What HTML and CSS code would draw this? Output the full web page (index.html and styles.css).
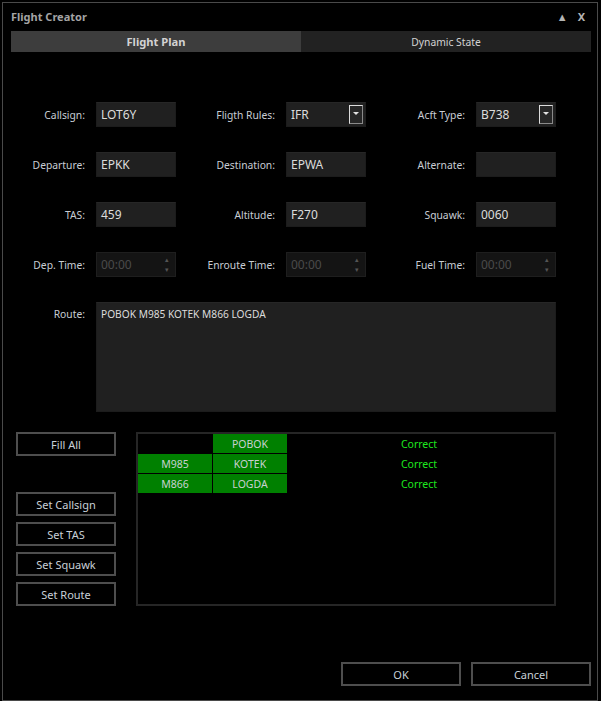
FILE: index.html
```html
<!DOCTYPE html>
<html>
<head>
<meta charset="utf-8">
<link rel="stylesheet" href="styles.css">
</head>
<body>
<div class="window">
  <div class="titlebar">
    <span class="title">Flight Creator</span>
    <span class="controls"><span class="ctl">▲</span><span class="ctl">X</span></span>
  </div>
  <div class="tabs">
    <div class="tab active">Flight Plan</div>
    <div class="tab">Dynamic State</div>
  </div>

  <div class="form">
    <label class="lbl">Callsign:</label>
    <div class="field">LOT6Y</div>
    <label class="lbl">Fligth Rules:</label>
    <div class="field combo">IFR<span class="drop"></span></div>
    <label class="lbl">Acft Type:</label>
    <div class="field combo">B738<span class="drop"></span></div>

    <label class="lbl">Departure:</label>
    <div class="field">EPKK</div>
    <label class="lbl">Destination:</label>
    <div class="field">EPWA</div>
    <label class="lbl">Alternate:</label>
    <div class="field"></div>

    <label class="lbl">TAS:</label>
    <div class="field">459</div>
    <label class="lbl">Altitude:</label>
    <div class="field">F270</div>
    <label class="lbl">Squawk:</label>
    <div class="field">0060</div>

    <label class="lbl">Dep. Time:</label>
    <div class="field time">00:00<span class="spin"><i>▴</i><i>▾</i></span></div>
    <label class="lbl">Enroute Time:</label>
    <div class="field time">00:00<span class="spin"><i>▴</i><i>▾</i></span></div>
    <label class="lbl">Fuel Time:</label>
    <div class="field time">00:00<span class="spin"><i>▴</i><i>▾</i></span></div>

    <label class="lbl top">Route:</label>
    <div class="field route">POBOK M985 KOTEK M866 LOGDA</div>
  </div>

  <div class="lower">
    <div class="actions">
      <button class="btn fill">Fill All</button>
      <button class="btn">Set Callsign</button>
      <button class="btn">Set TAS</button>
      <button class="btn">Set Squawk</button>
      <button class="btn">Set Route</button>
    </div>
    <div class="grid">
      <div class="row">
        <div class="cell"></div>
        <div class="cell green">POBOK</div>
        <div class="cell ok">Correct</div>
      </div>
      <div class="row">
        <div class="cell green">M985</div>
        <div class="cell green">KOTEK</div>
        <div class="cell ok">Correct</div>
      </div>
      <div class="row">
        <div class="cell green">M866</div>
        <div class="cell green">LOGDA</div>
        <div class="cell ok">Correct</div>
      </div>
    </div>
  </div>

  <div class="footer">
    <button class="btn wide">OK</button>
    <button class="btn wide">Cancel</button>
  </div>
</div>
</body>
</html>
```

FILE: styles.css
```css
html, body {
  margin: 0;
  padding: 0;
  background: #000;
}
body {
  padding: 2px 0 0 2px;
  font-family: "Noto Sans", "Open Sans", sans-serif;
  font-size: 10.3px;
  color: #c8ccd2;
}
.window {
  box-sizing: border-box;
  width: 596px;
  height: 699px;
  border: 1px solid #4a4a4a;
  background: #000;
  display: flex;
  flex-direction: column;
}
.titlebar {
  height: 28px;
  display: flex;
  align-items: center;
  justify-content: space-between;
  padding: 0 12px 1px 8px;
  box-sizing: border-box;
}
.title {
  font-weight: bold;
  color: #a4a4a4;
  font-size: 11px;
}
.controls {
  display: flex;
  gap: 10px;
  color: #b4b4b4;
  font-weight: bold;
  font-size: 11px;
}
.tabs {
  display: flex;
  width: 580px;
  margin-left: 8px;
  height: 21px;
}
.tab {
  flex: 1;
  display: flex;
  align-items: center;
  justify-content: center;
  background: #222;
  color: #d2d2d2;
  font-size: 10.3px;
}
.tab.active {
  background: #3d3d3d;
  font-weight: bold;
  font-size: 11.2px;
}
.form {
  margin-top: 50px;
  display: grid;
  grid-template-columns: 93px 80px 110px 80px 110px 80px;
  grid-auto-rows: 25px;
  row-gap: 25px;
}
.lbl {
  display: flex;
  align-items: center;
  justify-content: flex-end;
  padding-right: 11px;
  color: #c8cdd4;
}
.lbl.top {
  align-items: flex-start;
  padding-top: 5px;
}
.field {
  box-sizing: border-box;
  background: #202020;
  border: 1px solid #1c1c1c;
  border-top-color: #262626;
  color: #dcdcdc;
  font-size: 12px;
  padding-left: 4px;
  display: flex;
  align-items: center;
  position: relative;
}
.combo .drop {
  position: absolute;
  right: 2px;
  top: 2px;
  width: 14px;
  height: 19px;
  box-sizing: border-box;
  border: 1px solid #dcdcdc;
  border-right-color: #8a8a8a;
  border-bottom-color: #8a8a8a;
  background: #262626;
}
.combo .drop::after {
  content: "";
  position: absolute;
  left: 3px;
  top: 6px;
  border-left: 3px solid transparent;
  border-right: 3px solid transparent;
  border-top: 3px solid #e0e0e0;
}
.time {
  background: #141414;
  border-color: #1e1e1e;
  color: #4a4a4a;
}
.spin {
  position: absolute;
  right: 6px;
  top: 2px;
  bottom: 2px;
  display: flex;
  flex-direction: column;
  justify-content: space-between;
  font-size: 7px;
  color: #555;
  line-height: 9px;
}
.spin i { font-style: normal; }
.route {
  grid-column: 2 / 7;
  height: 110px;
  align-items: flex-start;
  padding-top: 4px;
  font-size: 10.2px;
}
.form > .lbl.top { height: 110px; }
.lower {
  margin-top: 105px;
  display: flex;
  padding-left: 13px;
  gap: 20px;
}
.actions {
  display: flex;
  flex-direction: column;
  gap: 6px;
  width: 100px;
}
.btn {
  box-sizing: border-box;
  height: 24px;
  background: #000;
  border: 2px solid #4e4e4e;
  color: #c8d0d8;
  font-family: "Noto Sans", "Open Sans", sans-serif;
  font-size: 11px;
  padding: 0;
}
.actions .fill {
  margin-bottom: 30px;
}
.grid {
  box-sizing: border-box;
  width: 420px;
  height: 174px;
  border: 2px solid #262626;
  display: flex;
  flex-direction: column;
  gap: 1px;
}
.row {
  display: grid;
  grid-template-columns: 74px 74px 1fr;
  column-gap: 1px;
  height: 19px;
}
.cell {
  display: flex;
  align-items: center;
  justify-content: center;
  font-size: 10.5px;
}
.cell.green {
  background: #008000;
  color: #c8d0d0;
}
.cell.ok {
  color: #1ee61e;
  padding-right: 4px;
}
.footer {
  margin-top: auto;
  margin-bottom: 14px;
  display: flex;
  justify-content: flex-end;
  gap: 10px;
  padding-right: 6px;
}
.btn.wide {
  width: 120px;
}
```
